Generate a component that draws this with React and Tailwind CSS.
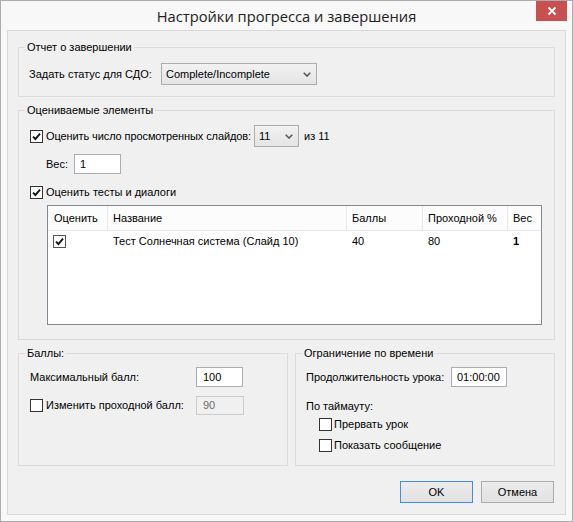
import React from "react";

const FONT = { fontFamily: '"Liberation Sans", Arial, sans-serif' };

function Check({ checked, dim }) {
  return (
    <span
      className={
        dim
          ? "w-[13px] h-[13px] border border-[#555555] bg-white flex items-center justify-center shrink-0"
          : "w-[13px] h-[13px] border border-[#333333] bg-white flex items-center justify-center shrink-0"
      }
    >
      {checked && (
        <svg width="9" height="9" viewBox="0 0 9 9">
          <path d="M1 4.6 L3.4 7 L8 1.6" fill="none" stroke="#111" strokeWidth="1.9" />
        </svg>
      )}
    </span>
  );
}

function Chevron() {
  return (
    <svg width="8" height="5" viewBox="0 0 8 5">
      <path d="M0.7 0.7 L4 4 L7.3 0.7" fill="none" stroke="#5a5a5a" strokeWidth="1.6" />
    </svg>
  );
}

function Select({ value, className }) {
  return (
    <div
      className={
        "h-[22px] border border-[#acacac] bg-linear-to-b from-[#f2f2f2] to-[#e4e4e4] flex items-center justify-between pl-[4px] pr-[5px] shrink-0 " +
        className
      }
    >
      <span>{value}</span>
      <Chevron />
    </div>
  );
}

function Legend({ children }) {
  return <legend className="ml-[6px] px-[2px] leading-[13px] text-black">{children}</legend>;
}

export default function App() {
  return (
    <div
      className="w-[573px] h-[522px] bg-[#f8f8f8] border border-[#adadad] flex flex-col text-[11px] text-black"
      style={FONT}
    >
      {/* Title bar */}
      <div className="h-[29px] grid grid-cols-[1fr_auto_1fr] items-start shrink-0">
        <div />
        <div
          className="pt-[5px] text-[14.7px] leading-[20px] text-[#222222]"
          style={{ fontFamily: '"Open Sans", "Noto Sans", sans-serif' }}
        >
          Настройки прогресса и завершения
        </div>
        <div className="flex justify-end pr-[5px]">
          <div className="w-[31px] h-[20px] bg-[#c75050] flex items-center justify-center">
            <svg width="10" height="10" viewBox="0 0 10 10">
              <path d="M1.5 1.5 L8.5 8.5 M8.5 1.5 L1.5 8.5" stroke="#ffffff" strokeWidth="1.8" />
            </svg>
          </div>
        </div>
      </div>

      {/* Inner panel */}
      <div className="mx-[6px] mb-[6px] flex-1 border border-[#d9d9d9] bg-[#f0f0f0] px-[10px] pt-[10px] flex flex-col">
        {/* Group 1 */}
        <fieldset className="border border-[#dcdcdc]">
          <Legend>Отчет о завершении</Legend>
          <div className="pl-[10px] pt-[9px] pb-[11px] flex items-center">
            <span className="w-[132px] whitespace-nowrap">Задать статус для СДО:</span>
            <Select value="Complete/Incomplete" className="w-[156px]" />
          </div>
        </fieldset>

        {/* Group 2 */}
        <fieldset className="border border-[#dcdcdc] mt-[7px]">
          <Legend>Оцениваемые элементы</Legend>
          <div className="pl-[11px] pt-[8px] pb-[14px] flex flex-col">
            <div className="h-[22px] flex items-center">
              <Check checked />
              <span className="ml-[3px] w-[206px] whitespace-nowrap tracking-[-0.1px]">Оценить число просмотренных слайдов:</span>
              <Select value="11" className="w-[45px] ml-[2px]" />
              <span className="ml-[5px] whitespace-nowrap">из 11</span>
            </div>
            <div className="mt-[7px] h-[20px] flex items-center pl-[16px]">
              <span className="w-[28px]">Вес:</span>
              <div className="w-[47px] h-[20px] border border-[#abadb3] bg-white flex items-center pl-[5px]">1</div>
            </div>
            <div className="mt-[10px] h-[16px] flex items-center">
              <Check checked />
              <span className="ml-[3px]">Оценить тесты и диалоги</span>
            </div>
            <div className="mt-[5px] ml-[17px] w-[495px] h-[120px] border border-[#828790] bg-white">
              <div className="grid grid-cols-[59px_239px_76px_85px_1fr] h-[25px] border-b border-[#e3e8ef] bg-[#fcfcfc]">
                <div className="pl-[6px] flex items-center">Оценить</div>
                <div className="pl-[5px] flex items-center border-l border-[#e3e8ef]">Название</div>
                <div className="pl-[5px] flex items-center border-l border-[#e3e8ef]">Баллы</div>
                <div className="pl-[5px] flex items-center border-l border-[#e3e8ef]">Проходной %</div>
                <div className="pl-[5px] flex items-center border-l border-[#e3e8ef]">Вес</div>
              </div>
              <div className="grid grid-cols-[59px_239px_76px_85px_1fr] h-[20px]">
                <div className="pl-[5px] flex items-center">
                  <Check checked dim />
                </div>
                <div className="pl-[6px] flex items-center">Тест Солнечная система (Слайд 10)</div>
                <div className="pl-[6px] flex items-center">40</div>
                <div className="pl-[6px] flex items-center">80</div>
                <div className="pl-[6px] flex items-center font-bold">1</div>
              </div>
            </div>
          </div>
        </fieldset>

        {/* Groups 3 & 4 */}
        <div className="mt-[7px] flex gap-[7px]">
          <fieldset className="border border-[#dcdcdc] w-[270px]">
            <Legend>Баллы:</Legend>
            <div className="pl-[11px] pt-[7px] flex flex-col">
              <div className="h-[20px] flex items-center">
                <span className="w-[166px]">Максимальный балл:</span>
                <div className="w-[47px] h-[20px] border border-[#abadb3] bg-white flex items-center pl-[6px]">100</div>
              </div>
              <div className="mt-[8px] h-[20px] flex items-center">
                <Check />
                <span className="ml-[3px] w-[150px] whitespace-nowrap">Изменить проходной балл:</span>
                <div className="w-[48px] h-[19px] border border-[#cccccc] bg-[#f0f0f0] text-[#6d6d6d] flex items-center pl-[6px]">90</div>
              </div>
            </div>
          </fieldset>
          <fieldset className="border border-[#dcdcdc] flex-1">
            <Legend>Ограничение по времени</Legend>
            <div className="pl-[10px] pt-[7px] pb-[13px] flex flex-col">
              <div className="h-[20px] flex items-center">
                <span className="w-[145px] whitespace-nowrap">Продолжительность урока:</span>
                <div className="w-[56px] h-[20px] border border-[#abadb3] bg-white flex items-center pl-[5px]">01:00:00</div>
              </div>
              <div className="mt-[11px] h-[16px] flex items-center">По таймауту:</div>
              <div className="mt-[4px] h-[13px] flex items-center pl-[13px]">
                <Check />
                <span className="ml-[2px]">Прервать урок</span>
              </div>
              <div className="mt-[8px] h-[13px] flex items-center pl-[13px]">
                <Check />
                <span className="ml-[2px]">Показать сообщение</span>
              </div>
            </div>
          </fieldset>
        </div>

        {/* Buttons */}
        <div className="mt-[15px] flex justify-end gap-[8px] pr-[1px]">
          <div className="w-[73px] h-[22px] border border-[#3c8fe4] bg-linear-to-b from-[#ececec] to-[#e2e2e2] flex items-center justify-center">
            OK
          </div>
          <div className="w-[73px] h-[22px] border border-[#acacac] bg-linear-to-b from-[#ececec] to-[#e2e2e2] flex items-center justify-center">
            Отмена
          </div>
        </div>
      </div>
    </div>
  );
}
